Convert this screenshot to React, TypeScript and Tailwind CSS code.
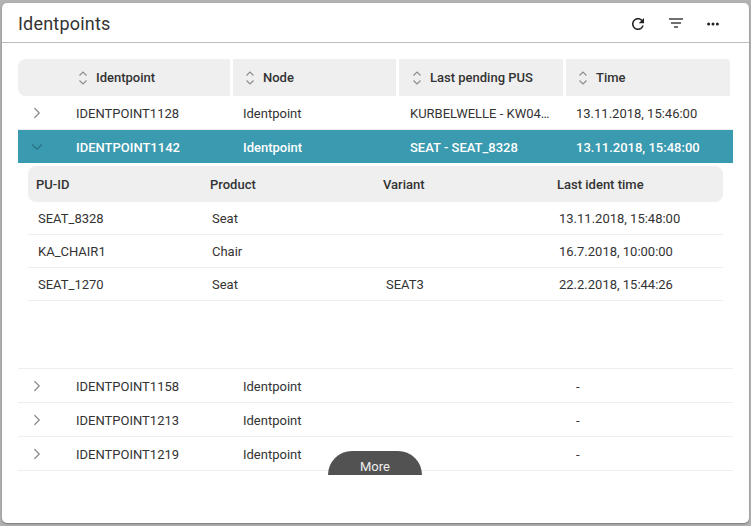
import { ChevronDown, ChevronRight } from "lucide-react";

const headers = ["Identpoint", "Node", "Last pending PUS", "Time"];

const subRows = [
  { id: "SEAT_8328", product: "Seat", variant: "", time: "13.11.2018, 15:48:00" },
  { id: "KA_CHAIR1", product: "Chair", variant: "", time: "16.7.2018, 10:00:00" },
  { id: "SEAT_1270", product: "Seat", variant: "SEAT3", time: "22.2.2018, 15:44:26" },
];

const lowerRows = ["IDENTPOINT1158", "IDENTPOINT1213", "IDENTPOINT1219"];

function SortIcon() {
  return (
    <svg width="8" height="14" viewBox="0 0 8 14" fill="none" stroke="#8a8a8a" strokeWidth="1.1" className="shrink-0">
      <path d="M0.5 4.5 L4 1 L7.5 4.5" />
      <path d="M0.5 9.5 L4 13 L7.5 9.5" />
    </svg>
  );
}

function Row({
  name,
  node = "Identpoint",
  pus = "",
  time = "-",
  selected = false,
}: {
  name: string;
  node?: string;
  pus?: string;
  time?: string;
  selected?: boolean;
}) {
  return (
    <div
      className={`grid grid-cols-[58px_167px_167px_166px_157px] items-center ${
        selected ? "h-[33px] pt-[3px] bg-[#3a9aaf] text-white font-medium" : "h-[34px] pt-[3px] border-b border-[#eeeeee]"
      }`}
    >
      <div className="pl-[10px] -mt-[3px]">
        {selected ? (
          <ChevronDown size={18} strokeWidth={1.5} color="#2c6f80" />
        ) : (
          <ChevronRight size={18} strokeWidth={1.6} color="#8a8a8a" />
        )}
      </div>
      <div>{name}</div>
      <div>{node}</div>
      <div className="truncate pr-[24px]">{pus}</div>
      <div>{time}</div>
    </div>
  );
}

export default function App() {
  return (
    <div className="w-[751px] h-[526px] bg-[#b2b2b2] pt-[3px] pl-[2px] font-['Roboto',sans-serif] text-[13px] text-[#333333]">
      <div className="relative w-[747px] h-[520px] bg-white rounded-[5px] shadow-[0_1px_2px_#777777]">
        <div className="flex items-center justify-between h-10 pt-[2px] border-b border-[#bdbdbd] pl-4 pr-[30px]">
          <h1 className="text-[18px] text-[#333333] tracking-[0.2px]">Identpoints</h1>
          <div className="flex items-center gap-[24px]">
            <svg width="18" height="18" viewBox="0 0 24 24" fill="#222222" className="-mr-[2px]">
              <path d="M17.65 6.35C16.2 4.9 14.21 4 12 4c-4.42 0-7.99 3.58-7.99 8s3.57 8 7.99 8c3.73 0 6.84-2.55 7.73-6h-2.08c-.82 2.33-3.04 4-5.65 4-3.31 0-6-2.69-6-6s2.69-6 6-6c1.66 0 3.14.69 4.22 1.78L13 11h7V4l-2.35 2.35z" />
            </svg>
            <svg width="14" height="10" viewBox="0 0 14 10" fill="none" stroke="#222222" strokeWidth="1.3" className="-mt-[1px]">
              <path d="M0 1 H14" />
              <path d="M2 5 H12" />
              <path d="M5 9 H9" />
            </svg>
            <svg width="12" height="4" viewBox="0 0 12 4" fill="#222222" className="mt-[1px]">
              <circle cx="1.6" cy="2" r="1.5" />
              <circle cx="6" cy="2" r="1.5" />
              <circle cx="10.4" cy="2" r="1.5" />
            </svg>
          </div>
        </div>

        <div className="pl-4 pt-4">
          <div className="flex gap-[3px] h-[37px] w-[712px] font-medium">
            {headers.map((h, i) => (
              <div
                key={h}
                className={`flex items-center gap-[9px] bg-[#efefef] ${
                  i === 0
                    ? "w-[212px] pl-[61px] rounded-l-lg"
                    : i === 1
                      ? "w-[163px] pl-[13px]"
                      : i === 2
                        ? "w-[164px] pl-[14px]"
                        : "w-[164px] pl-[13px] rounded-tr"
                }`}
              >
                <SortIcon />
                <span>{h}</span>
              </div>
            ))}
          </div>

          <div className="w-[715px]">
            <Row name="IDENTPOINT1128" pus="KURBELWELLE - KW041234" time="13.11.2018, 15:46:00" />
            <Row name="IDENTPOINT1142" pus="SEAT - SEAT_8328" time="13.11.2018, 15:48:00" selected />

            <div className="h-[206px] border-b border-[#eeeeee] pt-[3px] px-[10px]">
              <div className="grid grid-cols-[174px_173px_174px_1fr] items-center h-9 w-[695px] bg-[#efefef] rounded-lg pl-2 pt-[2px] font-medium">
                <div>PU-ID</div>
                <div>Product</div>
                <div>Variant</div>
                <div>Last ident time</div>
              </div>
              {subRows.map((r) => (
                <div
                  key={r.id}
                  className="grid grid-cols-[174px_174px_173px_1fr] items-center h-[33px] w-[695px] pl-[10px] pt-[1px] border-b border-[#eeeeee]"
                >
                  <div>{r.id}</div>
                  <div>{r.product}</div>
                  <div>{r.variant}</div>
                  <div>{r.time}</div>
                </div>
              ))}
            </div>

            {lowerRows.map((name) => (
              <Row key={name} name={name} />
            ))}
          </div>
        </div>

        <button className="absolute left-[326px] top-[448px] w-[94px] h-6 bg-[#525252] text-[#eeeeee] rounded-t-[24px] pt-[6px]">
          More
        </button>
      </div>
    </div>
  );
}
